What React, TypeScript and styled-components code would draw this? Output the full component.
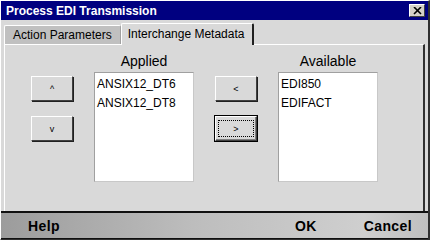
import React, { useState } from "react";
import styled, { createGlobalStyle, css } from "styled-components";

const GlobalStyle = createGlobalStyle`
  html, body {
    margin: 0;
    padding: 0;
    background: #d9d9d9;
  }
  body {
    font-family: "Liberation Sans", Arial, sans-serif;
  }
`;

const Window = styled.div`
  width: 430px;
  height: 240px;
  box-sizing: border-box;
  display: flex;
  flex-direction: column;
  background: #d9d9d9;
  border-top: 1px solid #ffffff;
  border-left: 1px solid #ffffff;
  border-right: 2px solid #303030;
  border-bottom: 1px solid #303030;
  overflow: hidden;
`;

const TitleBar = styled.div`
  height: 19px;
  background: #000080;
  color: #ffffff;
  display: flex;
  align-items: center;
  justify-content: space-between;
  padding: 0 3px 0 5px;
  font-weight: bold;
  font-size: 12px;
`;

const CloseButton = styled.button`
  width: 16px;
  height: 13px;
  padding: 0;
  margin: 0;
  background: #d4d0c8;
  border: 1px solid;
  border-color: #ffffff #404040 #404040 #ffffff;
  display: flex;
  align-items: center;
  justify-content: center;
`;

const Body = styled.div`
  flex: 1;
  display: flex;
  flex-direction: column;
  padding: 2px 3px 0 3px;
`;

const TabRow = styled.div`
  display: flex;
  align-items: flex-end;
  height: 22px;
`;

const Tab = styled.div<{ $active?: boolean }>`
  height: ${(p) => (p.$active ? "22px" : "19px")};
  box-sizing: border-box;
  display: flex;
  align-items: center;
  padding: 0 8px;
  font-size: 12px;
  color: #000;
  border-top: 1px solid #ffffff;
  border-left: 1px solid #ffffff;
  border-right: 1px solid #a0a0a0;
  border-radius: 2px 2px 0 0;
  ${(p) =>
    p.$active
      ? css`
          background: #d9d9d9;
          border-right: 2px solid #202020;
          padding: 0 8px 2px 6px;
          margin-bottom: -1px;
          position: relative;
          z-index: 1;
        `
      : css`
          background: #c0c0c0;
        `}
`;

const Panel = styled.div`
  flex: 1;
  border-top: 1px solid #ffffff;
  border-left: 1px solid #ffffff;
  border-right: 2px solid #303030;
  display: grid;
  grid-template-columns: 42px 100px 42px 100px;
  column-gap: 21px;
  padding: 7px 0 0 26px;
`;

const ListColumn = styled.div`
  display: flex;
  flex-direction: column;
`;

const ListLabel = styled.div`
  height: 20px;
  text-align: center;
  font-size: 14px;
  color: #000;
  line-height: 18px;
`;

const ListBox = styled.div`
  height: 110px;
  box-sizing: border-box;
  background: #ffffff;
  border: 1px solid #a0a0a0;
  border-right-color: #c8c8c8;
  border-bottom-color: #c8c8c8;
  padding: 2px 0 0 2px;
`;

const ListItem = styled.div`
  font-size: 12px;
  line-height: 19px;
  color: #000;
`;

const ButtonColumn = styled.div`
  display: flex;
  flex-direction: column;
  gap: 15px;
  padding-top: 24px;
`;

const MoveButton = styled.button<{ $default?: boolean }>`
  width: 42px;
  height: 25px;
  padding: 0;
  margin: 0;
  background: #d9d9d9;
  font-family: "Liberation Sans", Arial, sans-serif;
  font-size: 9px;
  color: #000;
  border: 1px solid;
  border-color: #ffffff #404040 #404040 #ffffff;
  box-shadow: 1px 1px 0 #202020;
  display: flex;
  align-items: center;
  justify-content: center;
  ${(p) =>
    p.$default &&
    css`
      outline: 1px solid #000;
      box-shadow: 1px 1px 0 #000, inset -1px -1px 0 #808080;
    `}
`;

const FocusRing = styled.span`
  border: 1px dotted #000;
  width: 34px;
  height: 15px;
  display: flex;
  align-items: center;
  justify-content: center;
`;

const Footer = styled.div`
  height: 25px;
  border-top: 2px solid #101010;
  border-bottom: 1px solid #101010;
  background: linear-gradient(to right, #9c9c9c 0%, #bdbdbd 45%, #cfcfcf 85%, #bfbfbf 100%);
  display: flex;
  align-items: center;
  font-weight: bold;
  font-size: 14px;
  letter-spacing: 0.4px;
  color: #000;
  padding: 0 16px 0 27px;
`;

const FooterLabel = styled.span<{ $push?: boolean }>`
  ${(p) =>
    p.$push &&
    css`
      margin-left: auto;
    `}
`;

const CancelLabel = styled.span`
  margin-left: 47px;
`;

export default function App() {
  const [applied] = useState(["ANSIX12_DT6", "ANSIX12_DT8"]);
  const [available] = useState(["EDI850", "EDIFACT"]);

  return (
    <>
      <GlobalStyle />
      <Window>
        <TitleBar>
          <span>Process EDI Transmission</span>
          <CloseButton>
            <svg width="9" height="8" viewBox="0 0 9 8">
              <path d="M1 0 L8 7 M8 0 L1 7" stroke="#000" strokeWidth="1.6" />
            </svg>
          </CloseButton>
        </TitleBar>
        <Body>
          <TabRow>
            <Tab>Action Parameters</Tab>
            <Tab $active>Interchange Metadata</Tab>
          </TabRow>
          <Panel>
            <ButtonColumn>
              <MoveButton>^</MoveButton>
              <MoveButton>v</MoveButton>
            </ButtonColumn>
            <ListColumn>
              <ListLabel>Applied</ListLabel>
              <ListBox>
                {applied.map((a) => (
                  <ListItem key={a}>{a}</ListItem>
                ))}
              </ListBox>
            </ListColumn>
            <ButtonColumn>
              <MoveButton>&lt;</MoveButton>
              <MoveButton $default>
                <FocusRing>&gt;</FocusRing>
              </MoveButton>
            </ButtonColumn>
            <ListColumn>
              <ListLabel>Available</ListLabel>
              <ListBox>
                {available.map((a) => (
                  <ListItem key={a}>{a}</ListItem>
                ))}
              </ListBox>
            </ListColumn>
          </Panel>
        </Body>
        <Footer>
          <FooterLabel>Help</FooterLabel>
          <FooterLabel $push>OK</FooterLabel>
          <CancelLabel>Cancel</CancelLabel>
        </Footer>
      </Window>
    </>
  );
}
